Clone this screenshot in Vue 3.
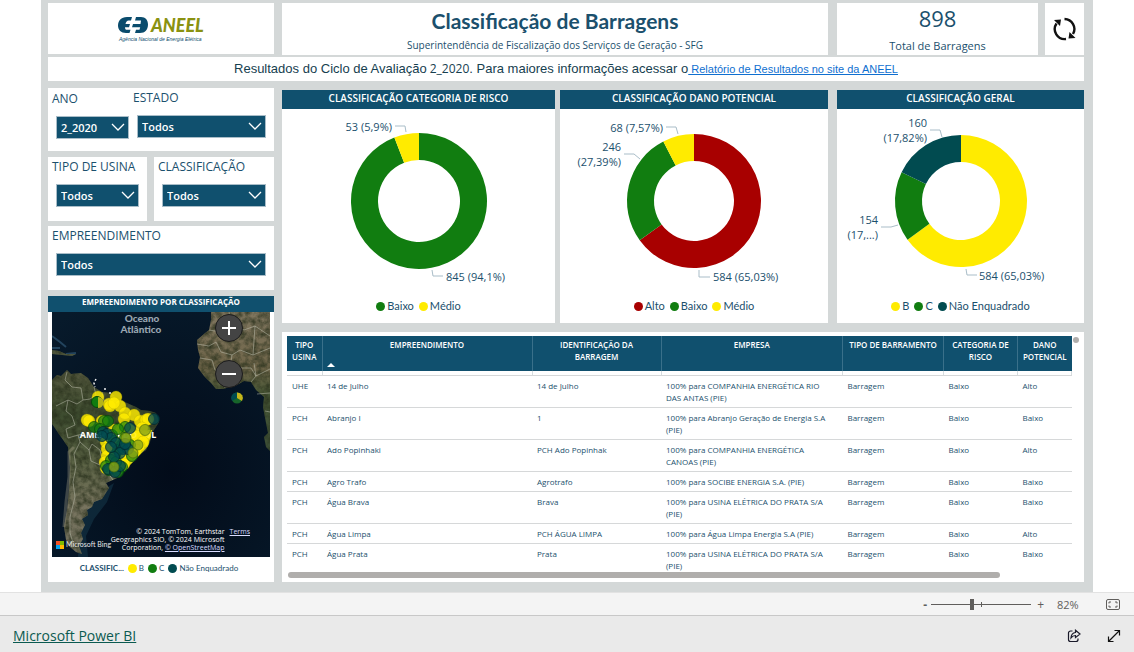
<script setup>
import { ref } from 'vue'

const COLORS = { green: '#117d10', yellow: '#ffeb00', red: '#a80000', teal: '#014b50' }

function arc(cx, cy, r0, r1, from, to) {
  const p = (r, t) => {
    const a = t * 2 * Math.PI - Math.PI / 2
    return `${(cx + r * Math.cos(a)).toFixed(2)} ${(cy + r * Math.sin(a)).toFixed(2)}`
  }
  const large = to - from > 0.5 ? 1 : 0
  return `M${p(r1, from)}A${r1} ${r1} 0 ${large} 1 ${p(r1, to)}L${p(r0, to)}A${r0} ${r0} 0 ${large} 0 ${p(r0, from)}Z`
}

function slices(chart) {
  const total = chart.data.reduce((s, d) => s + d.value, 0)
  let acc = 0
  return chart.data.map((d) => {
    const from = acc / total
    acc += d.value
    return { color: d.color, d: arc(120, 92, chart.inner, chart.outer, from, acc / total) }
  })
}

const charts = [
  {
    id: 'risco', title: 'CLASSIFICAÇÃO CATEGORIA DE RISCO', outer: 68, inner: 41,
    data: [
      { name: 'Baixo', value: 845, color: COLORS.green },
      { name: 'Médio', value: 53, color: COLORS.yellow },
    ],
    lines: ['96,17 106,17 107,23', '133,161 134,167 144,167'],
    labels: [
      { x: 93, y: 22, anchor: 'end', text: '53 (5,9%)' },
      { x: 147, y: 172, anchor: 'start', text: '845 (94,1%)' },
    ],
  },
  {
    id: 'dano', title: 'CLASSIFICAÇÃO DANO POTENCIAL', outer: 67, inner: 40,
    data: [
      { name: 'Alto', value: 584, color: COLORS.red },
      { name: 'Baixo', value: 246, color: COLORS.green },
      { name: 'Médio', value: 68, color: COLORS.yellow },
    ],
    lines: ['92,18 102,18 104,25', '50,45 60,45 66,50', '125,161 125,168 136,168'],
    labels: [
      { x: 89, y: 23, anchor: 'end', text: '68 (7,57%)' },
      { x: 47, y: 42, anchor: 'end', text: '246' },
      { x: 47, y: 57, anchor: 'end', text: '(27,39%)' },
      { x: 139, y: 172, anchor: 'start', text: '584 (65,03%)' },
    ],
  },
  {
    id: 'geral', title: 'CLASSIFICAÇÃO GERAL', outer: 66, inner: 39,
    data: [
      { name: 'B', value: 584, color: COLORS.yellow },
      { name: 'C', value: 154, color: COLORS.green },
      { name: 'Não Enquadrado', value: 160, color: COLORS.teal },
    ],
    lines: ['89,21 99,21 101,28', '40,118 50,118 57,116', '125,160 126,166 136,166'],
    labels: [
      { x: 86, y: 18, anchor: 'end', text: '160' },
      { x: 86, y: 33, anchor: 'end', text: '(17,82%)' },
      { x: 37, y: 115, anchor: 'end', text: '154' },
      { x: 37, y: 130, anchor: 'end', text: '(17,...)' },
      { x: 138, y: 171, anchor: 'start', text: '584 (65,03%)' },
    ],
  },
]

const columns = [
  { key: 'tipo', label: 'TIPO USINA' },
  { key: 'emp', label: 'EMPREENDIMENTO', sorted: true },
  { key: 'ident', label: 'IDENTIFICAÇÃO DA BARRAGEM' },
  { key: 'empresa', label: 'EMPRESA' },
  { key: 'barramento', label: 'TIPO DE BARRAMENTO' },
  { key: 'risco', label: 'CATEGORIA DE RISCO' },
  { key: 'dano', label: 'DANO POTENCIAL' },
]

const rows = [
  ['UHE', '14 de Julho', '14 de Julho', '100% para COMPANHIA ENERGÉTICA RIO DAS ANTAS (PIE)', 'Barragem', 'Baixo', 'Alto'],
  ['PCH', 'Abranjo I', '1', '100% para Abranjo Geração de Energia S.A (PIE)', 'Barragem', 'Baixo', 'Baixo'],
  ['PCH', 'Ado Popinhaki', 'PCH Ado Popinhak', '100% para COMPANHIA ENERGÉTICA CANOAS (PIE)', 'Barragem', 'Baixo', 'Alto'],
  ['PCH', 'Agro Trafo', 'Agrotrafo', '100% para SOCIBE ENERGIA S.A. (PIE)', 'Barragem', 'Baixo', 'Baixo'],
  ['PCH', 'Água Brava', 'Brava', '100% para USINA ELÉTRICA DO PRATA S/A (PIE)', 'Barragem', 'Baixo', 'Baixo'],
  ['PCH', 'Água Limpa', 'PCH ÁGUA LIMPA', '100% para Água Limpa Energia S.A (PIE)', 'Barragem', 'Baixo', 'Alto'],
  ['PCH', 'Água Prata', 'Prata', '100% para USINA ELÉTRICA DO PRATA S/A (PIE)', 'Barragem', 'Baixo', 'Baixo'],
]

const yellowDots = [
  [46, 85], [57, 92], [64, 85], [68, 94], [58, 94], [62, 91], [73, 101], [82, 103], [88, 109], [35, 108], [37, 109],
  [50, 109], [72, 107], [72, 115], [94, 108], [96, 107], [90, 116], [93, 124], [85, 124], [91, 130], [87, 134],
  [54, 130], [55, 137], [55, 144], [53, 150], [54, 156], [76, 144], [72, 152], [79, 138], [84, 138], [62, 118],
]
const greenDots = [
  [52, 109], [56, 109], [42, 115], [48, 117], [60, 123], [73, 115], [66, 117], [73, 126], [62, 129], [70, 133],
  [78, 133], [66, 138], [63, 143], [59, 148], [54, 154], [62, 155], [70, 155], [80, 144], [57, 158], [66, 160], [64, 150],
]
const tealDots = [
  [78, 116], [51, 120], [55, 122], [59, 126], [50, 124], [64, 131], [71, 137], [76, 137], [68, 141], [62, 145], [73, 132],
  [56, 157], [63, 160], [68, 154], [59, 135], [102, 107],
]
const zoom = ref(40)
</script>

<template>
  <div class="page">
    <main class="report">
      <header class="top">
        <div class="card logo">
          <svg width="88" height="28" viewBox="0 0 88 28" role="img" aria-label="ANEEL">
            <path d="M15 2H10C4 2 1 6 1 10.500S4 18 9 18h3.500l1-3.200H10c-1.400 0-2-1-2-2.600h4l1-3.200H8.500C9 7 10 5.600 11.500 5.600H14z" fill="#0a4c6d" />
            <path d="M19 2h5c4.500 0 7 3 7 7.500 0 5-3 8.500-8 8.500h-5l1-3.200h3.500l.7-2.600H15l1-3.200h7.500l.5-3.400h-6z" fill="#0a4c6d" />
            <text x="34" y="17" class="logo-name">ANEEL</text>
            <text x="2" y="26" class="logo-sub">Agência Nacional de Energia Elétrica</text>
          </svg>
        </div>
        <div class="card title">
          <h1>Classificação de Barragens</h1>
          <p>Superintendência de Fiscalização dos Serviços de Geração - SFG</p>
        </div>
        <div class="card total">
          <strong>898</strong>
          <span>Total de Barragens</span>
        </div>
        <button class="card refresh" aria-label="Limpar filtros">
          <svg width="26" height="26" viewBox="0 0 26 26" fill="none" stroke="#111" stroke-width="2.4">
            <path d="M12.500 3a10 10 0 0 1 8.500 15M14 23A10 10 0 0 1 4.500 7.500" />
            <path d="M2 4 9 3.500 8 10zM23.500 22 16.500 22.500 17.500 16z" fill="#111" stroke="none" />
          </svg>
        </button>
      </header>

      <p class="card intro">
        <span>Resultados do Ciclo de Avaliação</span><span class="cycle">2_2020</span><span>. Para maiores informações acessar o</span><a href="#relatorio">&nbsp;Relatório de Resultados no site da ANEEL</a>
      </p>

      <div class="body">
        <aside class="side">
          <div class="filters">
            <div class="card pair">
              <div class="field year">
                <label for="ano">ANO</label>
                <div class="select">
                  <select id="ano"><option>2_2020</option></select>
                  <svg width="14" height="8" viewBox="0 0 14 8"><path d="M1 1l6 6 6-6" /></svg>
                </div>
              </div>
              <div class="field state">
                <label for="estado">ESTADO</label>
                <div class="select">
                  <select id="estado"><option>Todos</option></select>
                  <svg width="14" height="8" viewBox="0 0 14 8"><path d="M1 1l6 6 6-6" /></svg>
                </div>
              </div>
            </div>
            <div class="split">
              <div class="card field">
                <label for="tipo">TIPO DE USINA</label>
                <div class="select">
                  <select id="tipo"><option>Todos</option></select>
                  <svg width="14" height="8" viewBox="0 0 14 8"><path d="M1 1l6 6 6-6" /></svg>
                </div>
              </div>
              <div class="card field wide">
                <label for="classe">CLASSIFICAÇÃO</label>
                <div class="select">
                  <select id="classe"><option>Todos</option></select>
                  <svg width="14" height="8" viewBox="0 0 14 8"><path d="M1 1l6 6 6-6" /></svg>
                </div>
              </div>
            </div>
            <div class="card field single">
              <label for="empreendimento">EMPREENDIMENTO</label>
              <div class="select">
                <select id="empreendimento"><option>Todos</option></select>
                <svg width="14" height="8" viewBox="0 0 14 8"><path d="M1 1l6 6 6-6" /></svg>
              </div>
            </div>
          </div>

          <section class="card mapcard">
            <h2>EMPREENDIMENTO POR CLASSIFICAÇÃO</h2>
            <div class="map">
              <svg class="chart" viewBox="0 0 218 245" preserveAspectRatio="xMidYMid slice" aria-hidden="true">
                <defs>
                  <radialGradient id="sea" cx="0.55" cy="0.65" r="0.8">
                    <stop offset="0" stop-color="#020b19" />
                    <stop offset="1" stop-color="#071a2b" />
                  </radialGradient>
                  <linearGradient id="sa" x1="0" y1="0" x2="0" y2="1">
                    <stop offset="0" stop-color="#56593f" />
                    <stop offset="0.25" stop-color="#3d4c2f" />
                    <stop offset="0.5" stop-color="#5a6244" />
                    <stop offset="0.75" stop-color="#78745f" />
                    <stop offset="1" stop-color="#6d6c5a" />
                  </linearGradient>
                  <linearGradient id="af" x1="0" y1="0" x2="0" y2="1">
                    <stop offset="0" stop-color="#80765f" />
                    <stop offset="0.4" stop-color="#6f6549" />
                    <stop offset="0.6" stop-color="#465635" />
                    <stop offset="1" stop-color="#3a4c35" />
                  </linearGradient>
                  <filter id="grain" x="0" y="0" width="100%" height="100%" color-interpolation-filters="sRGB">
                    <feTurbulence type="fractalNoise" baseFrequency="0.16" numOctaves="4" seed="4" />
                    <feColorMatrix values="0 0 0 0 0.16  0 0 0 0 0.19  0 0 0 0 0.11  0 1.5 0 0 -0.45" />
                    <feComposite in2="SourceGraphic" operator="in" result="n" />
                    <feMerge><feMergeNode in="SourceGraphic" /><feMergeNode in="n" /></feMerge>
                  </filter>
                </defs>
                <rect width="218" height="245" fill="url(#sea)" />
                <path d="M62 171 55 190 42 207 34 224 36 245 26 245 28 205 48 180z" fill="#16384b" opacity=".55" />
                <path d="M0 24 8 30 14 35M0 36 8 36M14 42 24 41" stroke="#356080" stroke-width="2" opacity=".6" fill="none" />
                <g filter="url(#grain)">
                  <path d="M0 68 5 63 9 64 15 58 19 62 29 61 36 66 42 75 50 80 59 81 66 87 75 91 84 95 89 98 98 99 104 101 107 110 100 121 98 130 94 138 80 148 74 157 67 165 61 168 54 171 57 176 50 187 42 190 40 195 35 198 36 203 30 207 33 213 29 221 31 227 27 234 30 242 24 240 18 235 14 228 12 215 15 198 17 178 18 155 16 135 9 125 0 112z" fill="url(#sa)" />
                  <path d="M0 38 7 39 14 42 24 42 20 44 10 43 0 42z" fill="#5a6248" />
                  <path d="M159 0 159 8 157 18 152 22 145 28 146 38 148 45 146 56 152 64 159 71 164 77 171 77 185 73 192 69 199 70 204 78 212 85 211 95 214 111 216 121 212 125 214 135 218 139V0z" fill="url(#af)" />
                </g>
                <path d="M12 215 14 190 17 165 17 140 22 135" stroke="#aaa28a" stroke-width="3" opacity=".35" fill="none" />
                <g fill="none" stroke="#c4c6b6" stroke-width="0.7" opacity=".7">
                  <path d="M15 60 13 68 20 75 29 76 31 88 25 92 16 88 4 94M31 88 38 87 44 83 42 75M16 88 14 99 20 104 23 113 14 117 16 126 26 123 33 122M26 123 28 130 37 138 40 132 48 138 50 147 47 151 56 161 61 168M28 130 22 142 24 155 21 170 23 185 18 205 18 221 22 234M37 138 39 149 48 153M50 80 52 89 59 88" />
                  <path d="M157 18 169 20 179 12 192 18 203 14 218 24M145 32 157 34 164 30 169 40 180 43 188 38 201 43 218 36M148 46 160 48 163 58 171 60 173 76M180 43 178 56 184 64 185 73M188 56 199 56 204 64 218 57M179 12 177 0M199 70 204 64 202 51M205 82 218 81M213 99 218 100M201 43 203 14" />
                </g>
                <path d="M44 67l-2 4 1 4M52 77h3M57 81h2" stroke="#eee" stroke-width="1.5" stroke-dasharray="2 2" fill="none" />
                <path d="M46 118 60 124 66 112 76 110 88 118 100 118 96 134 84 147 72 159 56 161 50 152 56 140 52 130z" fill="#e3dc0c" />
                <text x="90" y="10" class="ocean">Oceano</text>
                <text x="89" y="21" class="ocean">Atlântico</text>
                <text x="66" y="126" class="continent">AMÉRICA DO SUL</text>
                <g fill="#ffeb00" fill-opacity=".82" stroke="#a9a000" stroke-opacity=".5" stroke-width=".6">
                  <circle v-for="(d, i) in yellowDots" :key="i" :cx="d[0]" :cy="d[1]" r="6" />
                </g>
                <g fill="#117d10" fill-opacity=".7" stroke="#06480b" stroke-opacity=".9" stroke-width=".8">
                  <circle v-for="(d, i) in greenDots" :key="i" :cx="d[0]" :cy="d[1]" r="5.5" />
                </g>
                <g fill="#014b50" fill-opacity=".75" stroke="#02262c" stroke-opacity=".9" stroke-width=".8">
                  <circle v-for="(d, i) in tealDots" :key="i" :cx="d[0]" :cy="d[1]" r="5.5" />
                </g>
                <g fill="#8aa516" fill-opacity=".8" stroke="#4d6b0a" stroke-width=".7">
                  <circle cx="93" cy="118" r="5.5" /><circle cx="74" cy="126" r="5" /><circle cx="86" cy="133" r="5" /><circle cx="81" cy="141" r="5" /><circle cx="62" cy="155" r="5" />
                </g>
                <circle cx="45" cy="90" r="5.5" fill="#117d10" stroke="#06480b" />
                <path d="M46 85a5.500 5.500 0 0 1 0 11z" fill="#b5b51a" />
                <circle cx="185" cy="86" r="5.5" fill="#17652a" />
                <path d="M185 86V80.500A5.500 5.500 0 0 1 190 89z" fill="#c5b51a" />
                <path d="M185 86V80.500A5.500 5.500 0 0 0 180 89z" fill="#014b50" />
                <g>
                  <path fill="#f25022" d="M4 229h4v4H4z" /><path fill="#7fba00" d="M8 229h4v4H8z" />
                  <path fill="#00a4ef" d="M4 233h4v4H4z" /><path fill="#ffb900" d="M8 233h4v4H8z" />
                </g>
                <text x="14" y="235" class="bing">Microsoft Bing</text>
              </svg>
              <div class="zoomers">
                <button aria-label="Ampliar"><svg width="14" height="14" viewBox="0 0 14 14"><path d="M0 7h14M7 0v14" /></svg></button>
                <button aria-label="Reduzir"><svg width="14" height="14" viewBox="0 0 14 14"><path d="M0 7h14" /></svg></button>
              </div>
              <div class="credits">
                <p>© 2024 TomTom, Earthstar<br />Geographics SIO, © 2024 Microsoft<br />Corporation, <a href="#osm">© OpenStreetMap</a></p>
                <a href="#terms">Terms</a>
              </div>
            </div>
            <ul class="legend small">
              <li class="legend-title">CLASSIFIC...</li>
              <li v-for="d in charts[2].data" :key="d.name"><svg width="9" height="9" viewBox="0 0 9 9"><circle cx="4.5" cy="4.5" r="4.5" :fill="d.color" /></svg>{{ d.name }}</li>
            </ul>
          </section>
        </aside>

        <div class="main">
          <div class="charts">
            <section v-for="c in charts" :key="c.id" class="card donut" :class="c.id">
              <h2>{{ c.title }}</h2>
              <svg class="plot" width="240" height="184" viewBox="0 0 240 184" role="img" :aria-label="c.title">
                <path v-for="s in slices(c)" :key="s.d" :d="s.d" :fill="s.color" />
                <polyline v-for="l in c.lines" :key="l" :points="l" fill="none" stroke="#a9bdc8" />
                <text v-for="t in c.labels" :key="t.text" :x="t.x" :y="t.y" :text-anchor="t.anchor">{{ t.text }}</text>
              </svg>
              <ul class="legend">
                <li v-for="d in c.data" :key="d.name"><svg width="9" height="9" viewBox="0 0 9 9"><circle cx="4.5" cy="4.5" r="4.5" :fill="d.color" /></svg>{{ d.name }}</li>
              </ul>
            </section>
          </div>

          <section class="card grid">
            <div class="scroller">
              <table>
                <colgroup><col v-for="c in columns" :key="c.key" :class="'c-' + c.key" /></colgroup>
                <thead>
                  <tr>
                    <th v-for="c in columns" :key="c.key" scope="col" :class="'h-' + c.key">
                      {{ c.label }}
                      <svg v-if="c.sorted" class="sort" width="8" height="4" viewBox="0 0 8 4"><path d="M0 4 4 0l4 4z" fill="#fff" /></svg>
                    </th>
                  </tr>
                </thead>
                <tbody>
                  <tr class="gap" aria-hidden="true"><td v-for="c in columns" :key="c.key"></td></tr>
                  <tr v-for="(r, i) in rows" :key="i"><td v-for="(v, j) in r" :key="j">{{ v }}</td></tr>
                </tbody>
              </table>
            </div>
            <div class="hbar"></div>
            <div class="vbar"></div>
          </section>
        </div>
      </div>
    </main>

    <div class="zoombar">
      <button class="minus" aria-label="Menos zoom">-</button>
      <div class="slider"><input v-model="zoom" type="range" min="0" max="100" aria-label="Zoom" /></div>
      <button aria-label="Mais zoom">+</button>
      <output>82%</output>
      <button class="fit" aria-label="Ajustar à página">
        <svg width="14" height="11" viewBox="0 0 14 11" fill="none" stroke="#605e5c"><rect x=".5" y=".5" width="13" height="10" rx="1.5" /><path d="M3 4.500V3h2M9 3h2v1.500M11 6.500V8H9M5 8H3V6.500" /></svg>
      </button>
    </div>

    <footer>
      <a href="#powerbi">Microsoft Power BI</a>
      <div class="actions">
        <button aria-label="Compartilhar">
          <svg width="14" height="14" viewBox="0 0 14 14" fill="none" stroke="#1a1a2a" stroke-width="1.2"><path d="M5.500 2H3.500a2 2 0 0 0-2 2v6.500a2 2 0 0 0 2 2H9a2 2 0 0 0 2-2V9.500" /><path d="M8.500 1.200 13 5 8.500 8.600V6.500C6.500 6.500 5.200 7.200 4 8.800 4.200 5.800 5.700 3.800 8.500 3.500z" /></svg>
        </button>
        <button aria-label="Tela cheia">
          <svg width="14" height="14" viewBox="0 0 14 14" fill="none" stroke="#111" stroke-width="1.2"><path d="M1.500 12.500 12.500 1.500M7.500 1.500h5v5M1.500 7.500v5h5" /></svg>
        </button>
      </div>
    </footer>
  </div>
</template>

<style>
body { background: #fff; }
</style>

<style scoped>
.page { min-height: 100vh; display: flex; flex-direction: column; font-family: "Open Sans", "Noto Sans", sans-serif; color: #1b506d; }
* { box-sizing: border-box; }
h1, h2, p, ul { margin: 0; padding: 0; }
button { font: inherit; color: inherit; border: 0; padding: 0; background: none; }
.report { flex: 1; display: flex; flex-direction: column; margin: 0 41px; padding: 3px 9px 10px 7px; background: #d4d8d8; }
.card { background: #fff; }
.top { display: flex; height: 52px; }
.logo { width: 226px; margin-right: 8px; height: 51px; display: flex; align-items: center; justify-content: center; }
.logo-name { font: italic 900 18px Lato, sans-serif; fill: #8a9211; }
.logo-sub { font: italic 5px "Liberation Sans", sans-serif; fill: #0a4c6d; }
.title { flex: 1; margin-right: 9px; text-align: center; }
.title h1 { font: 700 21px/26px Lato, sans-serif; padding-top: 5px; }
.title p { font-size: 10px; line-height: 22px; }
.total { width: 201px; margin-right: 7px; display: flex; flex-direction: column; align-items: center; }
.total strong { font-weight: 400; font-size: 22px; line-height: 30px; }
.total span { font-size: 11px; line-height: 26px; }
.refresh { width: 39px; display: flex; align-items: center; justify-content: center; }
.intro { margin-top: 2px; height: 24px; display: flex; justify-content: center; align-items: center; font: 13px/24px "Liberation Sans", sans-serif; color: #16404f; white-space: nowrap; }
.cycle { font: 12px/24px "Open Sans", sans-serif; padding-left: 3px; }
.intro a { font-size: 11px; color: #0f6fd0; }
.body { flex: 1; display: flex; gap: 8px; margin-top: 7px; }
.side { width: 226px; display: flex; flex-direction: column; gap: 6px; }
.filters { display: flex; flex-direction: column; gap: 5px; }
.pair { display: flex; height: 63px; }
.pair .year { width: 81px; }
.pair .state { flex: 1; }
.split { display: flex; gap: 7px; margin-top: 1px; }
.split .card { height: 64px; width: 99px; }
.split .wide { flex: 1; }
.single { height: 64px; }
.field label { display: block; font-size: 12px; line-height: 20px; padding-left: 4px; white-space: nowrap; }
.select { position: relative; margin: 6px 8px 0; height: 23px; }
.year { padding-top: 1px; }
.year .select { margin: 6px 0 0 8px; }
.year select { border-right: 0; }
.select select { width: 100%; height: 100%; appearance: none; border: 1px solid #a9bdc8; border-radius: 0; background: #10506e; color: #fff; font: 600 11px "Open Sans", sans-serif; padding: 0 4px; }
.select svg { position: absolute; right: 4px; top: 8px; fill: none; stroke: #fff; stroke-width: 1.3; pointer-events: none; }
.mapcard { flex: 1; }
.mapcard h2, .donut h2 { background: #10506e; color: #fff; text-align: center; font-weight: 600; white-space: nowrap; }
.mapcard h2 { font-size: 8px; font-weight: 700; line-height: 12px; height: 16px; }
.map { position: relative; margin: 0 4px; height: 245px; overflow: hidden; }
.chart { display: block; width: 100%; height: 100%; }
.ocean { font: 900 10px Lato, sans-serif; fill: #98a5b0; text-anchor: middle; }
.continent { font: 700 9px "Noto Sans", sans-serif; fill: #fff; text-anchor: middle; }
.bing { font: 7px Lato, sans-serif; fill: #e8e8e8; }
.zoomers { position: absolute; top: 2px; right: 27px; display: flex; flex-direction: column; gap: 18px; }
.zoomers button { width: 28px; height: 28px; border-radius: 50%; background: #444; border: 1px solid #1c1c1c; display: flex; align-items: center; justify-content: center; }
.zoomers path { stroke: #fff; stroke-width: 2; }
.credits { position: absolute; right: 20px; bottom: 5px; display: flex; gap: 5px; font: 7px/8px "Open Sans", sans-serif; color: #fff; text-align: right; }
.credits a { color: #d8dcff; }
.legend { list-style: none; display: flex; justify-content: center; gap: 5px; font: 11px/16px Lato, sans-serif; white-space: nowrap; }
.legend li { display: flex; align-items: center; gap: 2px; }
.legend.small { font-size: 8px; gap: 4px; padding-top: 3px; padding-right: 4px; }
.legend .legend-title { font-weight: 700; }
.main { flex: 1; min-width: 0; display: flex; flex-direction: column; gap: 9px; padding-top: 2px; }
.charts { display: flex; height: 233px; }
.donut { display: flex; flex-direction: column; align-items: center; }
.donut h2 { width: 100%; font-size: 10px; line-height: 17px; height: 19px; }
.risco { flex: 273; margin-right: 5px; }
.dano { flex: 268; margin-right: 9px; }
.geral { flex: 247; }
.plot { overflow: visible; font-size: 11px; }
.plot text { fill: #1b506d; }
.donut .legend { padding-top: 5px; }
.grid { position: relative; flex: 1; padding: 4px 12px 0 5px; }
.scroller { height: 235px; overflow: hidden; }
table { width: 100%; table-layout: fixed; border-collapse: collapse; font-size: 8px; line-height: 12px; }
.c-tipo { width: 35px; }
.c-emp { width: 210px; }
.c-ident { width: 129px; }
.c-barramento { width: 101px; }
.c-risco { width: 74px; }
.c-dano { width: 54px; }
th { position: relative; height: 35px; padding: 3px 1px 0; vertical-align: top; background: #10506e; color: #fff; font-weight: 600; border-right: 1px solid #3a708a; }
th:last-child { border-right: 0; }
.h-ident { padding: 3px 16px 0; }
.sort { position: absolute; left: 4px; bottom: 4px; }
td { padding: 4px 9px 3px 5px; vertical-align: top; border-bottom: 1px solid #d6d8d9; }
.gap td { height: 4px; padding: 0; border-right: 1px solid #d6dde0; }
.hbar { position: absolute; left: 6px; right: 84px; bottom: 4px; height: 6px; border-radius: 3px; background: #b0aeac; }
.vbar { position: absolute; right: 5px; top: 5px; width: 6px; height: 6px; border-radius: 3px; background: #b0aeac; }
.zoombar { height: 23px; display: flex; align-items: center; justify-content: flex-end; padding-right: 14px; background: #f4f4f4; border-top: 1px solid #e2e2e2; color: #605e5c; font-size: 12px; }
.minus { font-weight: 700; }
.slider { position: relative; width: 100px; height: 20px; margin: 0 6px 0 4px; }
.slider::after { content: ""; position: absolute; left: 50px; top: 8px; width: 1px; height: 5px; background: #605e5c; }
.slider input { appearance: none; display: block; width: 100%; height: 20px; margin: 0; background: linear-gradient(#605e5c, #605e5c) center / 100% 1px no-repeat; }
.slider input::-webkit-slider-thumb { appearance: none; width: 4px; height: 11px; background: #605e5c; }
.zoombar output { width: 24px; margin-left: 13px; font-size: 11px; }
.fit { margin-left: 25px; display: flex; }
footer { height: 37px; display: flex; align-items: center; justify-content: space-between; padding: 4px 13px 0; background: #eaeaea; border-top: 1px solid #c8c8c8; }
footer a { font-size: 14px; line-height: 18px; color: #0b5a50; }
.actions { display: flex; gap: 26px; }
.actions button { display: flex; }
</style>
